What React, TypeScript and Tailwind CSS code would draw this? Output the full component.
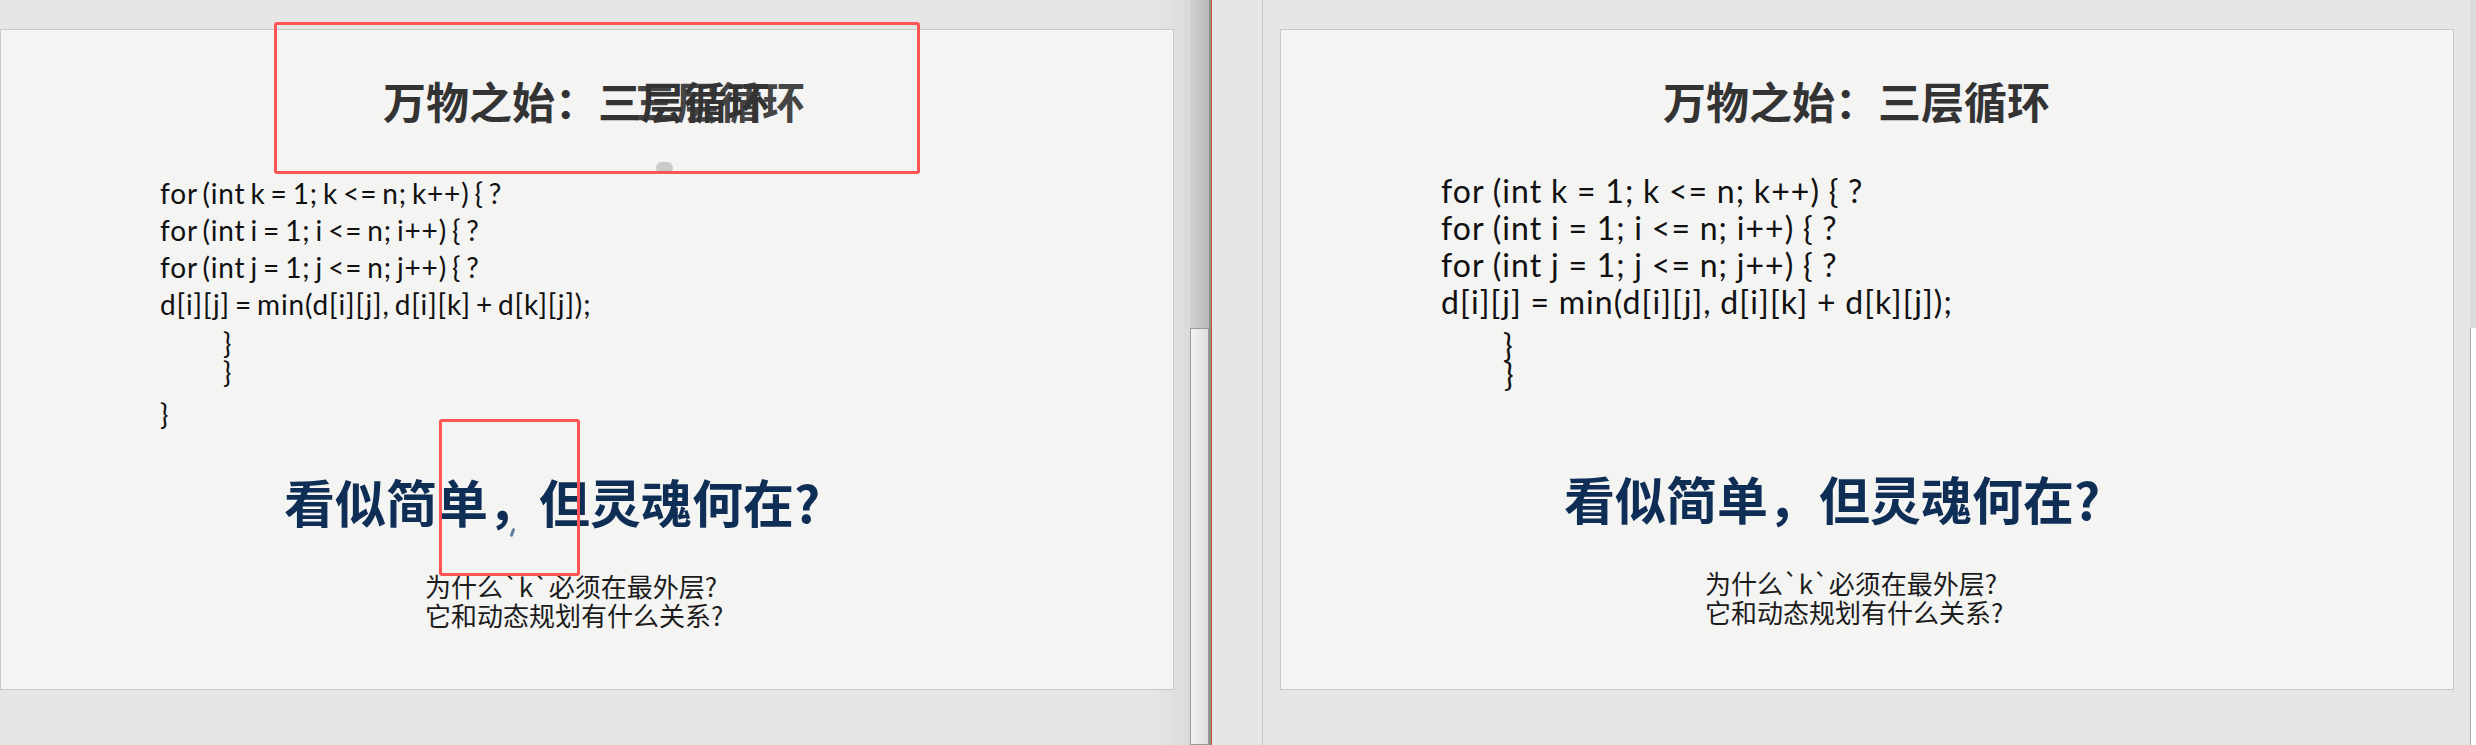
const codeLines = [
  "for (int k = 1; k <= n; k++) { ?",
  "for (int i = 1; i <= n; i++) { ?",
  "for (int j = 1; j <= n; j++) { ?",
  "d[i][j] = min(d[i][j], d[i][k] + d[k][j]);",
];

function Slide({ broken }: { broken?: boolean }) {
  return (
    <div className="h-[661px] w-[1174px] border border-[#c8c8c8] bg-[#f4f4f3] font-['Noto_Sans_CJK_SC',sans-serif]">
      {/* title */}
      <div className="pl-[382px] pt-[49px]">
        <div className="relative inline-block whitespace-nowrap text-[43px] font-bold leading-[43px] text-[#333333]">
          万物之始：三层循环
          {broken && (
            <span className="absolute left-[250px] top-0 whitespace-nowrap text-[#333333] opacity-90">三层循环</span>
          )}
        </div>
      </div>

      {/* code */}
      <div
        className={
          broken
            ? "mt-[51px] pl-[159px] font-['Lato','Noto_Sans_CJK_SC',sans-serif] text-[28px] tracking-[0.85px] [word-spacing:-3px] text-[#111111]"
            : "mt-[48px] pl-[160px] font-['Lato','Noto_Sans_CJK_SC',sans-serif] text-[32px] tracking-[1.1px] [word-spacing:-0.7px] text-[#111111]"
        }
      >
        {codeLines.map((line) => (
          <div key={line} className="whitespace-pre leading-[37px]">
            {line}
          </div>
        ))}
        <div className={broken ? "mt-[6px] pl-[63px] leading-[29px]" : "mt-[10px] pl-[62px] leading-[29px]"}>{"}"}</div>
        <div className="pl-[63px] leading-[29px]">{"}"}</div>
        {broken ? (
          <div className="mt-[13px] leading-[29px]">{"}"}</div>
        ) : (
          <div className="mt-[9px] h-[29px]" />
        )}
      </div>

      {/* question */}
      <div className="mt-[47px] whitespace-nowrap pl-[283px] text-[51px] font-bold leading-[51px] text-[#0f2e56]">
        看似简单，但灵魂何在?
      </div>
      <div className="mt-[44px] pl-[424px] text-[26px] leading-[29px] text-[#1c1c1c]">
        <div>为什么`k`必须在最外层?</div>
        <div>它和动态规划有什么关系?</div>
      </div>
    </div>
  );
}

export default function App() {
  return (
    <div className="flex h-[745px] w-[2476px] overflow-hidden bg-[#e6e6e6]">
      {/* left pane */}
      <div className="relative w-[1190px] shrink-0 bg-gradient-to-r from-[#e6e6e6] from-[97%] to-[#dadada] pt-[29px]">
        <Slide broken />
        {/* annotation boxes */}
        <div className="absolute left-[656px] top-[162px] h-[12px] w-[17px] rounded-full bg-[#cacaca]" />
        <div className="absolute left-[274px] top-[22px] h-[152px] w-[646px] rounded-[3px] border-[3px] border-[#ff5454]" />
        <div className="absolute left-[439px] top-[419px] h-[157px] w-[141px] rounded-[3px] border-[3px] border-[#ff5454]" />
        <div className="absolute left-[511px] top-[528px] h-[9px] w-[3px] rotate-[20deg] rounded-full bg-[#3a5f8a] opacity-80" />
      </div>

      {/* scrollbar */}
      <div className="flex w-[19px] shrink-0 flex-col">
        <div className="h-[328px] bg-gradient-to-r from-[#d2d2d2] to-[#b9b9b9]" />
        <div className="flex-1 border border-[#9a9a9a] bg-gradient-to-r from-[#f3f3f3] to-[#dedede]" />
      </div>
      <div className="w-[2px] shrink-0 bg-[#8e8e8e]" />
      <div className="w-px shrink-0 bg-[#cf532e]" />

      <div className="w-[50px] shrink-0" />
      <div className="w-px shrink-0 bg-[#c4c4c4]" />
      <div className="w-[17px] shrink-0" />

      {/* right pane */}
      <div className="shrink-0 pt-[29px]">
        <Slide />
      </div>
      <div className="w-[16px] shrink-0" />
      <div className="flex w-[6px] shrink-0 flex-col">
        <div className="h-[328px] bg-[#dcdcdc]" />
        <div className="flex-1 border-l border-[#a6a6a6] bg-white" />
      </div>
    </div>
  );
}
